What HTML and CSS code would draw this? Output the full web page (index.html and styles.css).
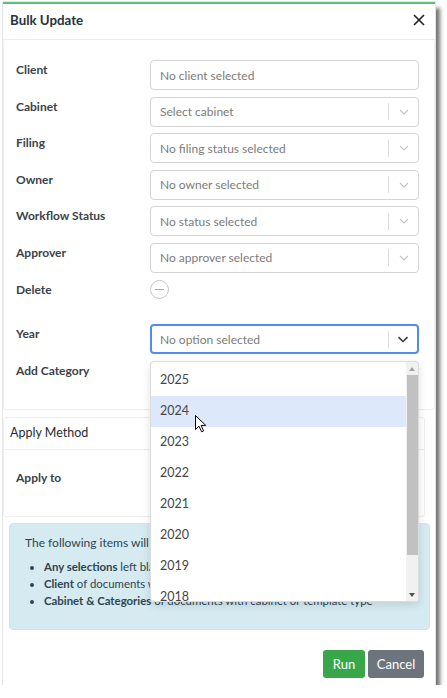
FILE: index.html
```html
<!DOCTYPE html>
<html lang="en">
<head>
<meta charset="utf-8">
<title>Bulk Update</title>
<link rel="stylesheet" href="styles.css">
</head>
<body>
<div class="dialog">
  <div class="dlg-header">
    <h1 class="dlg-title">Bulk Update</h1>
    <button class="close-btn" aria-label="Close">
      <svg width="12" height="12" viewBox="0 0 12 12"><path d="M1 1 L11 11 M11 1 L1 11" stroke="#222" stroke-width="1.6" fill="none"/></svg>
    </button>
  </div>

  <div class="card card-main">
    <div class="form-row">
      <label class="lbl">Client</label>
      <div class="field"><span class="ph">No client selected</span></div>
    </div>
    <div class="form-row">
      <label class="lbl">Cabinet</label>
      <div class="field select"><span class="ph">Select cabinet</span><span class="sep"></span><span class="chev"><svg width="10" height="6" viewBox="0 0 10 6"><path d="M1 1 L5 5 L9 1" stroke="#c4c4c4" stroke-width="1.2" fill="none"/></svg></span></div>
    </div>
    <div class="form-row">
      <label class="lbl">Filing</label>
      <div class="field select"><span class="ph">No filing status selected</span><span class="sep"></span><span class="chev"><svg width="10" height="6" viewBox="0 0 10 6"><path d="M1 1 L5 5 L9 1" stroke="#c4c4c4" stroke-width="1.2" fill="none"/></svg></span></div>
    </div>
    <div class="form-row">
      <label class="lbl">Owner</label>
      <div class="field select"><span class="ph">No owner selected</span><span class="sep"></span><span class="chev"><svg width="10" height="6" viewBox="0 0 10 6"><path d="M1 1 L5 5 L9 1" stroke="#c4c4c4" stroke-width="1.2" fill="none"/></svg></span></div>
    </div>
    <div class="form-row">
      <label class="lbl">Workflow Status</label>
      <div class="field select"><span class="ph">No status selected</span><span class="sep"></span><span class="chev"><svg width="10" height="6" viewBox="0 0 10 6"><path d="M1 1 L5 5 L9 1" stroke="#c4c4c4" stroke-width="1.2" fill="none"/></svg></span></div>
    </div>
    <div class="form-row">
      <label class="lbl">Approver</label>
      <div class="field select"><span class="ph">No approver selected</span><span class="sep"></span><span class="chev"><svg width="10" height="6" viewBox="0 0 10 6"><path d="M1 1 L5 5 L9 1" stroke="#c4c4c4" stroke-width="1.2" fill="none"/></svg></span></div>
    </div>
    <div class="form-row row-delete">
      <label class="lbl">Delete</label>
      <div class="toggle"><span class="minus"></span></div>
    </div>
    <div class="form-row">
      <label class="lbl">Year</label>
      <div class="field-wrap">
        <div class="field select focused"><span class="ph">No option selected</span><span class="sep"></span><span class="chev"><svg width="12" height="7" viewBox="0 0 12 7"><path d="M1.5 1.2 L6 5.5 L10.5 1.2" stroke="#3a3a3a" stroke-width="1.6" fill="none"/></svg></span></div>
        <div class="dropdown">
          <ul class="options">
            <li class="opt">2025</li>
            <li class="opt hover">2024</li>
            <li class="opt">2023</li>
            <li class="opt">2022</li>
            <li class="opt">2021</li>
            <li class="opt">2020</li>
            <li class="opt">2019</li>
            <li class="opt">2018</li>
          </ul>
          <div class="scrollbar">
            <span class="arr arr-up"></span>
            <span class="thumb"></span>
            <span class="track-rest"></span>
            <span class="arr arr-down"></span>
          </div>
        </div>
        <svg class="cursor" width="12" height="18" viewBox="0 0 12 18"><path d="M0.5 0.5 L0.5 14.5 L4 11.2 L6.6 16.8 L8.6 15.9 L6.1 10.4 L10.8 10.4 Z" fill="#fff" stroke="#000" stroke-width="1" stroke-linejoin="round"/></svg>
      </div>
    </div>
    <div class="form-row">
      <label class="lbl">Add Category</label>
      <div class="field select"></div>
    </div>
  </div>

  <div class="card card-apply">
    <div class="card-head">Apply Method</div>
    <div class="card-body">
      <div class="form-row">
        <label class="lbl">Apply to</label>
        <div class="field-plain"></div>
      </div>
    </div>
  </div>

  <div class="info">
    <p class="info-lead">The following items will be ignored:</p>
    <ul class="info-list">
      <li><b>Any selections</b> left blank</li>
      <li><b>Client</b> of documents with a client</li>
      <li><b>Cabinet &amp; Categories</b> of documents with cabinet or template type</li>
    </ul>
  </div>

  <div class="dlg-footer">
    <button class="btn btn-run">Run</button>
    <button class="btn btn-cancel">Cancel</button>
  </div>
</div>
</body>
</html>
```

FILE: styles.css
```css
* { box-sizing: border-box; }
html, body { margin: 0; padding: 0; background: #fff; }
body {
  font-family: Lato, "Open Sans", sans-serif;
  font-size: 12px;
  color: #333;
}

.dialog {
  margin: 2px 0 0 3px;
  width: 432px;
  height: 683px;
  background: #fff;
  border-top: 2px solid #5dbf7c;
  box-shadow: 0 0 0 1px #e6e6e6, 5px 6px 4px rgba(0, 0, 0, 0.55);
  display: flex;
  flex-direction: column;
}
.dialog > * { flex: none; }

.dlg-header {
  height: 36px;
  border-bottom: 1px solid #ececec;
  display: flex;
  align-items: center;
  justify-content: space-between;
  padding: 0 10px 3px 7px;
}
.dlg-title {
  margin: 0;
  font-size: 13.3px;
  font-weight: 700;
  color: #27323c;
}
.close-btn {
  border: 0;
  background: none;
  padding: 0;
  width: 12px;
  height: 12px;
  display: flex;
}

.card {
  border: 1px solid #efefef;
  border-radius: 3px;
}
.card-main {
  border-top: 0;
  padding: 20px 13px 18px 12px;
  display: flex;
  flex-direction: column;
  gap: 6.6px;
}
.card-main > * { flex: none; }

.form-row {
  display: flex;
  align-items: flex-start;
  height: 30px;
}
.row-delete { height: 38px; }
.lbl {
  width: 134px;
  flex: none;
  padding-top: 2px;
  line-height: 16px;
  font-size: 12px;
  font-weight: 700;
  color: #3a4249;
}

.field, .field-wrap, .field-plain { width: 269px; flex: none; }
.field {
  height: 30px;
  border: 1px solid #d4d4d4;
  border-radius: 4px;
  display: flex;
  align-items: center;
  padding-left: 9px;
  background: #fff;
}
.ph {
  flex: 1;
  font-size: 12px;
  color: #7c7c7c;
  white-space: nowrap;
}
.sep {
  width: 1px;
  height: 17px;
  background: #dcdcdc;
}
.chev {
  width: 29px;
  display: flex;
  justify-content: center;
  align-items: center;
}
.focused {
  border: 2px solid #4f8ef0;
  padding-left: 8px;
}
.focused .chev { width: 28px; }

.toggle {
  width: 19px;
  height: 19px;
  border: 1px solid #c6c6c6;
  border-radius: 50%;
  display: flex;
  align-items: center;
  justify-content: center;
}
.minus {
  width: 9px;
  height: 1px;
  background: #a8a8a8;
}

.field-wrap { position: relative; }
.dropdown {
  position: absolute;
  left: 0;
  top: 37.2px;
  width: 269px;
  height: 241px;
  background: #fff;
  border: 1px solid #dcdcdc;
  border-radius: 4px;
  box-shadow: 0 3px 8px rgba(0, 0, 0, 0.12);
  display: flex;
  overflow: hidden;
  z-index: 10;
}
.options {
  list-style: none;
  margin: 0;
  padding: 3px 0 0;
  flex: 1;
  overflow: hidden;
}
.opt {
  height: 30.9px;
  line-height: 30.9px;
  padding-left: 9px;
  font-size: 12.5px;
  color: #454545;
}
.opt.hover { background: #dde9fa; }
.scrollbar {
  width: 12px;
  flex: none;
  background: #f1f1f1;
  display: flex;
  flex-direction: column;
  align-items: center;
}
.arr {
  height: 13px;
  width: 12px;
  display: flex;
  flex: none;
  position: relative;
}
.arr-up::after, .arr-down::after {
  content: "";
  position: absolute;
  left: 3px;
  width: 0; height: 0;
  border-left: 3px solid transparent;
  border-right: 3px solid transparent;
}
.arr-up::after { top: 5px; border-bottom: 4px solid #a3a3a3; }
.arr-down::after { top: 5px; border-top: 4px solid #505050; }
.thumb {
  width: 11px;
  height: 180px;
  background: #c1c1c1;
  flex: none;
}
.track-rest { flex: 1; }

.cursor {
  position: absolute;
  left: 45px;
  top: 91px;
  z-index: 20;
}

.card-apply {
  margin: 7px 10px 0 0;
  height: 100px;
}
.card-head {
  height: 32px;
  border-bottom: 1px solid #efefef;
  padding: 7px 6px 0;
  font-size: 12.5px;
  color: #1f2a33;
  line-height: 16px;
}
.card-body {
  padding: 18px 12px 0;
}

.info {
  margin: 6px 5px 0 6px;
  height: 107px;
  background: #d5ebf1;
  border: 1px solid #cde6ec;
  border-radius: 4px;
  padding: 10.5px 15px 0;
  color: #2f4450;
  font-size: 11.4px;
  line-height: 17px;
}
.info-lead { margin: 0; font-size: 12px; }
.info-list {
  margin: 7px 0 0;
  padding-left: 19px;
}
.info-list b { font-weight: 700; }

.dlg-footer {
  margin-top: 20px;
  display: flex;
  justify-content: flex-end;
  gap: 3px;
  padding-right: 11px;
}
.btn {
  height: 28px;
  border: 0;
  border-radius: 3px;
  color: #fff;
  font-family: Lato, "Open Sans", sans-serif;
  font-size: 13px;
  padding: 0;
}
.btn-run { width: 42px; background: #37a74a; }
.btn-cancel { width: 56px; background: #6c757d; }
```
